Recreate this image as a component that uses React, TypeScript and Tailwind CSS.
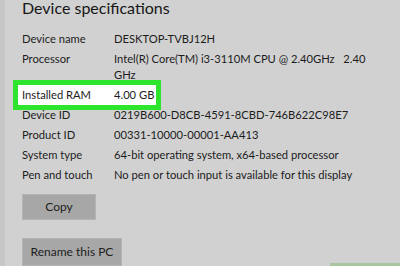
const specs: { label: string; value: string }[] = [
  { label: 'Device name', value: 'DESKTOP-TVBJ12H' },
  { label: 'Processor', value: 'Intel(R) Core(TM) i3-3110M CPU @ 2.40GHz\u00a0\u00a0\u00a02.40 GHz' },
  { label: 'Installed RAM', value: '4.00 GB' },
  { label: 'Device ID', value: '0219B600-D8CB-4591-8CBD-746B622C98E7' },
  { label: 'Product ID', value: '00331-10000-00001-AA413' },
  { label: 'System type', value: '64-bit operating system, x64-based processor' },
  { label: 'Pen and touch', value: 'No pen or touch input is available for this display' },
]

function SpecRow({ label, value }: { label: string; value: string }) {
  return (
    <div className="grid grid-cols-[92px_258px] py-[2px] leading-[16px]">
      <span>{label}</span>
      <span>{value}</span>
    </div>
  )
}

export default function App() {
  return (
    <div
      className="relative flex h-[266px] w-[400px] overflow-hidden bg-[#d1d1d1] text-[#1c1c1c]"
      style={{ fontFamily: 'Lato, "Noto Sans", sans-serif' }}
    >
      <div className="w-[5px] shrink-0 bg-[#c7c7c7]" />
      <div className="flex flex-col pl-[17px]">
        <h1 className="-mt-[2px] text-[16px] leading-[20px] font-normal text-[#161616]">
          Device specifications
        </h1>

        <div className="mt-[11px] flex flex-col text-[11.2px]">
          {specs.map((s) =>
            s.label === 'Installed RAM' ? (
              <div
                key={s.label}
                className="-my-[5px] -ml-[9px] w-[148px] border-[5px] border-[#2ee52e] bg-white pl-[4px]"
              >
                <div className="grid grid-cols-[92px_1fr] whitespace-nowrap py-[2px] leading-[16px]">
                  <span>{s.label}</span>
                  <span>{s.value}</span>
                </div>
              </div>
            ) : (
              <SpecRow key={s.label} label={s.label} value={s.value} />
            ),
          )}
        </div>

        <button
          type="button"
          className="mt-[9px] h-[26px] w-[74px] border border-[#b4b4b4] bg-[#a7a7a7] text-[12px] text-[#1c1c1c]"
        >
          Copy
        </button>
        <button
          type="button"
          className="mt-[18px] h-[28px] w-[100px] border border-[#b4b4b4] bg-[#a7a7a7] text-[12px] text-[#1c1c1c]"
        >
          Rename this PC
        </button>
      </div>

      <div className="absolute bottom-0 right-0 h-[3px] w-[70px] bg-[#a9c6a0]" />
    </div>
  )
}
